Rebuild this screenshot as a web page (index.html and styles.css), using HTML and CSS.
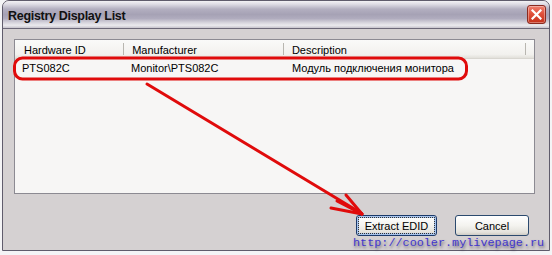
FILE: index.html
```html
<!DOCTYPE html>
<html>
<head>
<meta charset="utf-8">
<link rel="stylesheet" href="styles.css">
</head>
<body>
<div class="window">
  <div class="titlebar">
    <span class="title">Registry Display List</span>
    <span class="close">
      <svg width="11" height="11" viewBox="0 0 11 11"><path d="M1.5 1.5 L9.5 9.5 M9.5 1.5 L1.5 9.5" stroke="#fff" stroke-width="2.2" stroke-linecap="square"/></svg>
    </span>
  </div>
  <div class="client">
    <div class="listview">
      <div class="header">
        <div class="hcell c1">Hardware ID</div>
        <div class="hcell c2">Manufacturer</div>
        <div class="hcell c3">Description</div>
        <div class="hcell c4"></div>
      </div>
      <div class="row">
        <div class="cell c1">PTS082C</div>
        <div class="cell c2">Monitor\PTS082C</div>
        <div class="cell c3">Модуль подключения монитора</div>
      </div>
    </div>
    <div class="buttons">
      <button class="btn default"><span class="focus">Extract EDID</span></button>
      <button class="btn">Cancel</button>
    </div>
  </div>
</div>
<svg class="annot" width="552" height="255" viewBox="0 0 552 255">
  <rect x="14.5" y="58" width="452" height="21" rx="8" ry="8" fill="none" stroke="#e00b0b" stroke-width="3"/>
  <g stroke="#e00b0b" stroke-width="3" stroke-linecap="round" fill="none">
    <path d="M147 84 L361 213"/>
    <path d="M346 195 L362 214"/>
    <path d="M331 208 L362 214"/>
    <path d="M337 201 L362 214"/>
  </g>
</svg>
<div class="watermark">http://cooler.mylivepage.ru</div>
</body>
</html>
```
FILE: styles.css
```css
* { box-sizing: border-box; }
html, body { margin: 0; padding: 0; }
body {
  width: 552px;
  height: 255px;
  background: #f4f4f6;
  position: relative;
  overflow: hidden;
  font-family: "Liberation Sans", Arial, sans-serif;
  font-size: 11px;
  color: #000;
}
.window {
  width: 548px;
  height: 251px;
  margin-left: 2px;
  border: 1px solid #605c6c;
  border-radius: 7px 7px 0 0;
  background: #d5d1d2;
  display: flex;
  flex-direction: column;
  overflow: hidden;
}
.titlebar {
  height: 28px;
  flex: none;
  display: flex;
  align-items: center;
  justify-content: space-between;
  padding: 0 3px 0 5px;
  border-bottom: 1px solid #6c6878;
  background: linear-gradient(to bottom,
    #f3f2f5 0%, #dedce4 12%, #b3afc0 30%, #a6a2b5 50%, #b0acbe 65%,
    #d6d4dc 80%, #ebeaee 90%, #c6c3cc 100%);
}
.title {
  font-weight: bold;
  font-size: 12.5px;
  letter-spacing: -0.3px;
  color: #111;
  padding-top: 2px;
}
.close {
  width: 19px;
  height: 19px;
  border: 1px solid #8a2a20;
  border-radius: 3px;
  background: linear-gradient(to bottom, #f08070 0%, #e0503a 45%, #c4301a 100%);
  display: flex;
  align-items: center;
  justify-content: center;
  box-shadow: inset 0 0 0 1px rgba(255,255,255,0.35);
}
.close svg { display: block; }
.client {
  flex: 1;
  display: flex;
  flex-direction: column;
  padding: 10px 14px 0 11px;
}
.listview {
  height: 155px;
  border: 1px solid #8c8a92;
  background: #f7f6f5;
}
.header {
  display: flex;
  height: 19px;
  background: linear-gradient(to bottom, #fafaf9 0%, #f2f1ee 80%, #e2e0da 100%);
  border-bottom: 1px solid #d8d6d0;
}
.hcell {
  height: 100%;
  display: flex;
  align-items: center;
  padding: 2px 0 0 9px;
  position: relative;
}
.hcell + .hcell::before {
  content: "";
  position: absolute;
  left: 0;
  top: 3px;
  bottom: 3px;
  width: 1px;
  background: #b8b6b0;
}
.c1 { width: 109px; }
.c2 { width: 161px; }
.c3 { width: 244px; }
.c4 { flex: 1; }
.row {
  display: flex;
  height: 17px;
  align-items: center;
}
.cell { padding: 1px 0 0 7px; }
.buttons {
  display: flex;
  justify-content: flex-end;
  gap: 18px;
  margin-top: 21px;
  padding-right: 6px;
}
.btn {
  font-family: "Liberation Sans", Arial, sans-serif;
  font-size: 11px;
  color: #000;
  height: 21px;
  width: 74px;
  padding: 0;
  border: 1px solid #2c4a6e;
  border-radius: 3px;
  background: linear-gradient(to bottom, #ffffff 0%, #f4f3ef 50%, #e4e2dc 85%, #cfccc4 100%);
  display: flex;
  align-items: center;
  justify-content: center;
}
.btn.default {
  width: 81px;
  border-color: #1c3a6a;
  box-shadow: inset 0 0 0 2px #a8c4ec;
}
.focus {
  display: flex;
  align-items: center;
  justify-content: center;
  width: 75px;
  height: 15px;
  outline: 1px dotted #333;
}
.annot {
  position: absolute;
  left: 0;
  top: 0;
  pointer-events: none;
}
.watermark {
  position: absolute;
  left: 353px;
  top: 236px;
  font-family: "Liberation Mono", "Courier New", monospace;
  font-size: 11.8px;
  color: #4236cc;
  text-shadow: 1px 2px 3px rgba(40,30,60,0.65);
  white-space: nowrap;
}
```
